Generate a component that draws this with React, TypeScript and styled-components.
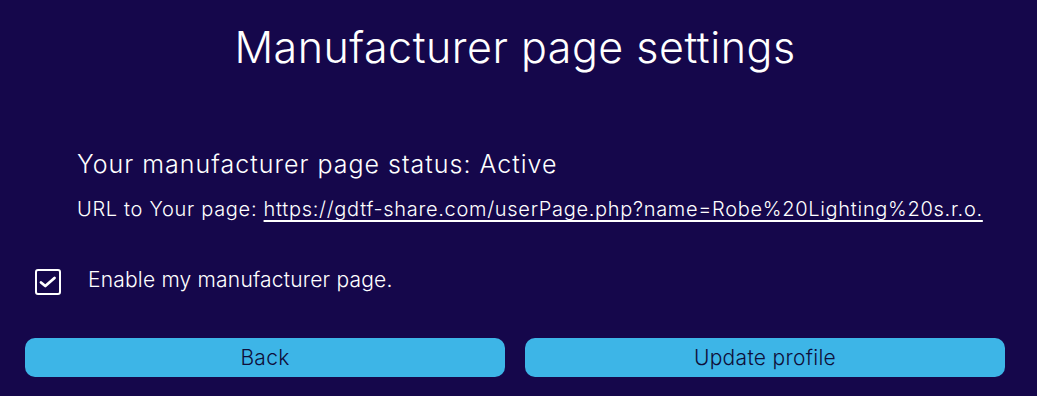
import React from "react";
import styled, { createGlobalStyle } from "styled-components";

const Global = createGlobalStyle`
  html, body { margin: 0; padding: 0; background: #15074b; }
  body { font-family: Inter, "Noto Sans", sans-serif; color: #ffffff; }
`;

const Page = styled.div`
  width: 980px;
  margin-left: 25px;
  padding-top: 18px;
`;

const Title = styled.h1`
  margin: 0;
  text-align: center;
  font-size: 43px;
  font-weight: 300;
  line-height: 58px;
  letter-spacing: 0.5px;
`;

const Info = styled.div`
  padding: 73px 0 0 52px;
  display: flex;
  flex-direction: column;
  gap: 18px;
`;

const Status = styled.div`
  font-size: 25px;
  font-weight: 300;
  line-height: 30px;
  letter-spacing: 1px;
`;

const UrlLine = styled.div`
  font-size: 20px;
  font-weight: 300;
  line-height: 24px;
  letter-spacing: 0.7px;
`;

const Link = styled.a`
  color: #ffffff;
  text-decoration: underline;
  text-underline-offset: 4px;
`;

const CheckRow = styled.label`
  display: flex;
  align-items: center;
  gap: 27px;
  margin: 48px 0 0 10px;
  font-size: 21px;
  font-weight: 300;
  letter-spacing: 0.2px;
  cursor: pointer;
`;

const CheckText = styled.span`
  line-height: 20px;
  margin-bottom: 5px;
`;

const Box = styled.span`
  width: 22px;
  height: 22px;
  border: 2px solid #ffffff;
  border-radius: 3px;
  display: flex;
  align-items: center;
  justify-content: center;
`;

const Buttons = styled.div`
  display: grid;
  grid-template-columns: 1fr 1fr;
  gap: 20px;
  margin-top: 43px;
`;

const Button = styled.button`
  height: 39px;
  border: none;
  border-radius: 10px;
  background: #3db5e7;
  color: #0f0f3a;
  font-family: Inter, "Noto Sans", sans-serif;
  font-size: 21px;
  font-weight: 300;
  letter-spacing: 0.3px;
  cursor: pointer;
`;

export default function App() {
  return (
    <>
      <Global />
      <Page>
        <Title>Manufacturer page settings</Title>
        <Info>
          <Status>Your manufacturer page status: Active</Status>
          <UrlLine>
            URL to Your page:{" "}
            <Link href="#">https://gdtf-share.com/userPage.php?name=Robe%20Lighting%20s.r.o.</Link>
          </UrlLine>
        </Info>
        <CheckRow>
          <Box>
            <svg width="22" height="22" viewBox="0 0 22 22">
              <path d="M4 11.5 L8.3 15 L17.5 7" fill="none" stroke="#fff" strokeWidth="2.8" strokeLinecap="round" strokeLinejoin="round" />
            </svg>
          </Box>
          <CheckText>Enable my manufacturer page.</CheckText>
        </CheckRow>
        <Buttons>
          <Button>Back</Button>
          <Button>Update profile</Button>
        </Buttons>
      </Page>
    </>
  );
}
